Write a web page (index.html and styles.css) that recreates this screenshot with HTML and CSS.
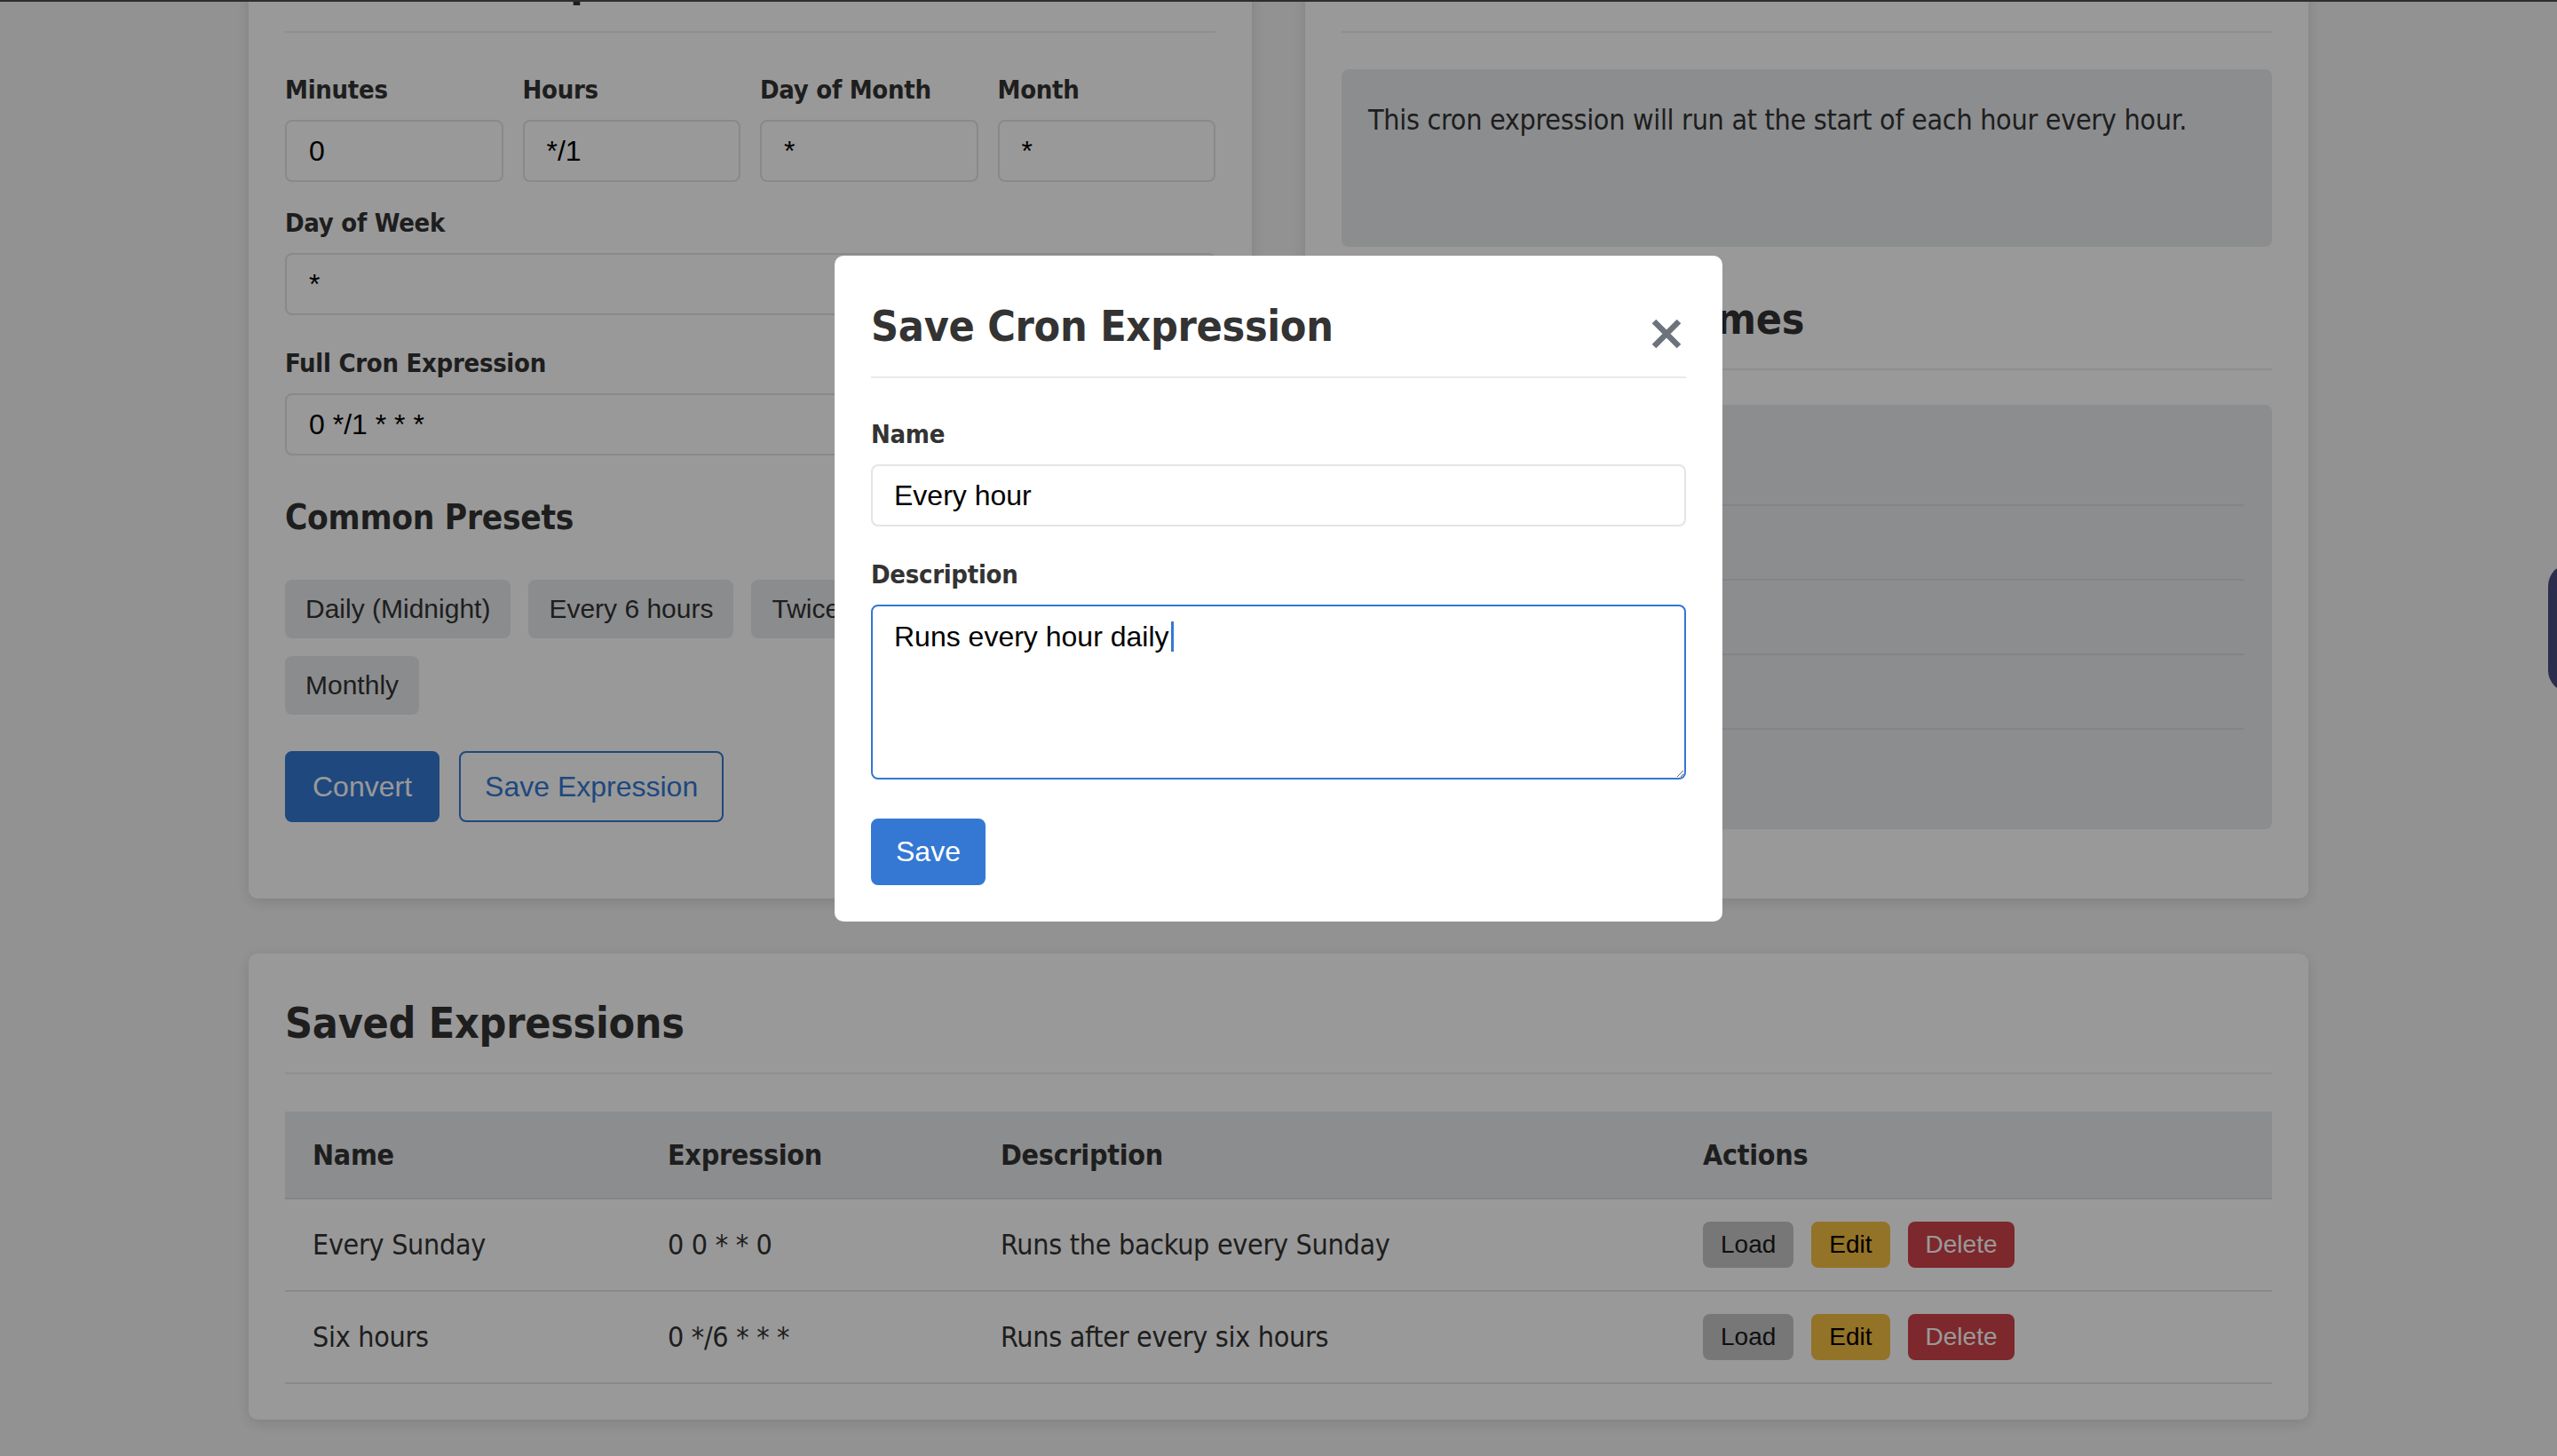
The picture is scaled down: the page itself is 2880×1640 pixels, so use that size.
FILE: index.html
```html
<!DOCTYPE html>
<html lang="en">
<head>
<meta charset="utf-8">
<title>Cron Expression Converter</title>
<link rel="stylesheet" href="styles.css">
</head>
<body>
<div class="page">
  <div class="top-grid">
    <section class="card">
      <h2 class="card-title">Build Cron Expression</h2>
      <div class="fields-4">
        <div class="field">
          <label class="label">Minutes</label>
          <input class="input" type="text" value="0">
        </div>
        <div class="field">
          <label class="label">Hours</label>
          <input class="input" type="text" value="*/1">
        </div>
        <div class="field">
          <label class="label">Day of Month</label>
          <input class="input" type="text" value="*">
        </div>
        <div class="field">
          <label class="label">Month</label>
          <input class="input" type="text" value="*">
        </div>
      </div>
      <div class="field field-dow">
        <label class="label">Day of Week</label>
        <input class="input" type="text" value="*">
      </div>
      <div class="field field-full">
        <label class="label">Full Cron Expression</label>
        <input class="input" type="text" value="0 */1 * * *">
      </div>
      <h3 class="sub-title">Common Presets</h3>
      <div class="presets">
        <button class="preset">Daily (Midnight)</button>
        <button class="preset">Every 6 hours</button>
        <button class="preset">Twice Daily</button>
        <button class="preset">Weekly (Sunday)</button>
        <button class="preset">Monthly</button>
      </div>
      <div class="actions-row">
        <button class="btn btn-primary">Convert</button>
        <button class="btn btn-outline">Save Expression</button>
      </div>
    </section>

    <section class="card">
      <h2 class="card-title">Human Readable Format</h2>
      <div class="result-box">This cron expression will run at the start of each hour every hour.</div>
      <h2 class="card-title card-title-second">Next Execution Times</h2>
      <ul class="next-list">
        <li class="next-item">Mon 10:00</li>
        <li class="next-item">Mon 11:00</li>
        <li class="next-item">Mon 12:00</li>
        <li class="next-item">Mon 13:00</li>
        <li class="next-item">Mon 14:00</li>
      </ul>
    </section>
  </div>

  <section class="card card-saved">
    <h2 class="card-title">Saved Expressions</h2>
    <table class="saved-table">
      <thead>
        <tr>
          <th class="col-name">Name</th>
          <th class="col-expr">Expression</th>
          <th class="col-desc">Description</th>
          <th class="col-act">Actions</th>
        </tr>
      </thead>
      <tbody>
        <tr>
          <td>Every Sunday</td>
          <td>0 0 * * 0</td>
          <td>Runs the backup every Sunday</td>
          <td><div class="row-actions"><button class="sm-btn sm-load">Load</button><button class="sm-btn sm-edit">Edit</button><button class="sm-btn sm-delete">Delete</button></div></td>
        </tr>
        <tr>
          <td>Six hours</td>
          <td>0 */6 * * *</td>
          <td>Runs after every six hours</td>
          <td><div class="row-actions"><button class="sm-btn sm-load">Load</button><button class="sm-btn sm-edit">Edit</button><button class="sm-btn sm-delete">Delete</button></div></td>
        </tr>
      </tbody>
    </table>
  </section>
</div>

<div class="side-tab"></div>

<div class="overlay">
  <div class="modal">
    <div class="modal-header">
      <h2 class="modal-title">Save Cron Expression</h2>
      <span class="modal-close" aria-label="Close">
        <svg width="34" height="34" viewBox="0 0 34 34"><path d="M3 3 L31 31 M31 3 L3 31" stroke="#6c737c" stroke-width="6.5" fill="none"/></svg>
      </span>
    </div>
    <label class="label">Name</label>
    <input class="input modal-input" type="text" value="Every hour">
    <label class="label label-desc">Description</label>
    <div class="textarea-wrap">
      <textarea class="textarea">Runs every hour daily</textarea>
      <span class="caret"></span>
    </div>
    <button class="btn-save">Save</button>
  </div>
</div>

<div class="top-line"></div>
</body>
</html>
```

FILE: styles.css
```css
* {
  box-sizing: border-box;
}

html, body {
  margin: 0;
  padding: 0;
}

body {
  background: #f4f4f4;
  font-family: "DejaVu Sans Condensed", "DejaVu Sans", sans-serif;
  font-stretch: condensed;
  font-size: 32px;
  line-height: 48px;
  letter-spacing: -0.3px;
  color: #333;
  overflow: hidden;
  height: 1640px;
}

.page {
  width: 2320px;
  margin: -99px auto 0;
}

.top-grid {
  display: grid;
  grid-template-columns: 1130px 1130px;
  column-gap: 60px;
  margin-bottom: 62px;
}

.card {
  background: #fff;
  border-radius: 10px;
  padding: 40px 41px 40px 41px;
  box-shadow: 0 4px 16px rgba(0, 0, 0, 0.12);
}

.card-title {
  margin: 9px 0 42px;
  font-size: 48px;
  line-height: 58px;
  font-weight: bold;
  color: #333;
  padding-bottom: 27px;
  border-bottom: 2px solid #eeeeee;
}

.card-title-second {
  margin-top: 52px;
  margin-bottom: 39px;
}

.label {
  display: block;
  font-size: 29px;
  line-height: 44px;
  font-weight: bold;
  color: #333;
  margin-bottom: 12px;
}

.fields-4 {
  display: grid;
  grid-template-columns: repeat(4, 1fr);
  column-gap: 22px;
  margin-top: 0;
}

.field-dow {
  margin-top: 24px;
}

.field-full {
  margin-top: 32px;
}

.input {
  display: block;
  width: 100%;
  height: 70px;
  padding: 0 25px;
  border: 2px solid #e4e4e8;
  border-radius: 8px;
  background: #fff;
  font-family: "Liberation Sans", Arial, sans-serif;
  font-size: 32px;
  letter-spacing: 0;
  color: #000;
  outline: none;
}

.sub-title {
  margin: 47px 0 47px;
  font-size: 38.5px;
  line-height: 46px;
  font-weight: bold;
  color: #333;
}

.presets {
  display: flex;
  flex-wrap: wrap;
  gap: 20px 20px;
}

.preset {
  height: 66px;
  padding: 0 23px;
  border: none;
  border-radius: 8px;
  background: #e8eaed;
  font-family: "Liberation Sans", Arial, sans-serif;
  font-size: 30px;
  letter-spacing: 0;
  color: #333;
}

.actions-row {
  display: flex;
  gap: 22px;
  margin-top: 41px;
}

.btn {
  height: 80px;
  padding: 0 29px;
  border-radius: 8px;
  font-family: "Liberation Sans", Arial, sans-serif;
  font-size: 32px;
  letter-spacing: 0;
  border: 2px solid #3478d3;
}

.btn-primary {
  background: #3478d3;
  color: #fff;
}

.btn-outline {
  background: #fff;
  color: #3478d3;
  padding: 0 27px;
}

.result-box {
  min-height: 200px;
  margin-top: -1px;
  padding: 33px 30px;
  background: #e9ebee;
  border-radius: 8px;
  color: #333;
}

.next-list {
  list-style: none;
  margin: 0 0 38px;
  padding: 30px 32px;
  background: #e9ebee;
  border-radius: 8px;
}

.next-item {
  height: 84px;
  padding: 18px 0;
  border-bottom: 2px solid #dadde1;
  color: #333;
}

.next-item:last-child {
  border-bottom: none;
  height: 82px;
}

.card-saved {
  padding-bottom: 40px;
}

.saved-table {
  width: 100%;
  border-collapse: collapse;
  table-layout: fixed;
}

.saved-table th {
  background: #e9ebee;
  text-align: left;
  font-weight: bold;
  padding: 25px 31px 24px;
  border-bottom: 2px solid #dcdfe3;
  color: #333;
}

.saved-table td {
  padding: 25px 31px;
  border-bottom: 2px solid #e4e4e4;
  color: #333;
  vertical-align: middle;
}

.col-name { width: 400px; }
.col-expr { width: 375px; }
.col-desc { width: 791px; }

.row-actions {
  display: flex;
  gap: 20px;
}

.sm-btn {
  height: 52px;
  padding: 0 20px;
  border: none;
  border-radius: 8px;
  font-family: "Liberation Sans", Arial, sans-serif;
  font-size: 28px;
  letter-spacing: 0;
}

.sm-load {
  background: #c6c6c6;
  color: #1a1a1a;
}

.sm-edit {
  background: #f5c044;
  color: #000;
}

.sm-delete {
  background: #d1434a;
  color: #fff;
}

.side-tab {
  position: fixed;
  top: 635px;
  right: -40px;
  width: 50px;
  height: 145px;
  border-radius: 28px;
  background: #4a4a80;
}

.overlay {
  position: fixed;
  inset: 0;
  background: rgba(0, 0, 0, 0.4);
  display: flex;
  justify-content: center;
  align-items: flex-start;
  padding-top: 288px;
}

.modal {
  width: 1000px;
  background: #fff;
  border-radius: 10px;
  padding: 40px 41px 41px;
}

.modal-header {
  display: flex;
  justify-content: space-between;
  align-items: flex-start;
  padding-bottom: 28px;
  border-bottom: 2px solid #e9e9ee;
  margin-top: 10px;
  margin-bottom: 41px;
}

.modal-title {
  margin: 0;
  font-size: 48px;
  line-height: 58px;
  font-weight: bold;
  color: #333;
}

.modal-close {
  display: block;
  width: 34px;
  height: 34px;
  margin-top: 21px;
  margin-right: 5px;
}

.modal-close svg {
  display: block;
}

.modal-input {
  padding: 0 24px;
}

.label-desc {
  margin-top: 32px;
}

.textarea-wrap {
  position: relative;
}

.textarea {
  display: block;
  width: 100%;
  height: 197px;
  padding: 16px 24px;
  border: 2px solid #3477d2;
  border-radius: 8px;
  font-family: "Liberation Sans", Arial, sans-serif;
  font-size: 32px;
  line-height: 37px;
  letter-spacing: 0;
  color: #000;
  outline: none;
  resize: vertical;
}

.caret {
  position: absolute;
  left: 338px;
  top: 19px;
  width: 3px;
  height: 34px;
  background: #3478d4;
}

.btn-save {
  margin-top: 44px;
  height: 75px;
  padding: 0 26px;
  border: 2px solid #3478d4;
  border-radius: 8px;
  background: #3478d4;
  color: #fff;
  font-family: "Liberation Sans", Arial, sans-serif;
  font-size: 32px;
  letter-spacing: 0;
}

.top-line {
  position: fixed;
  top: 0;
  left: 0;
  right: 0;
  height: 2px;
  background: #2e2e2e;
}
```
